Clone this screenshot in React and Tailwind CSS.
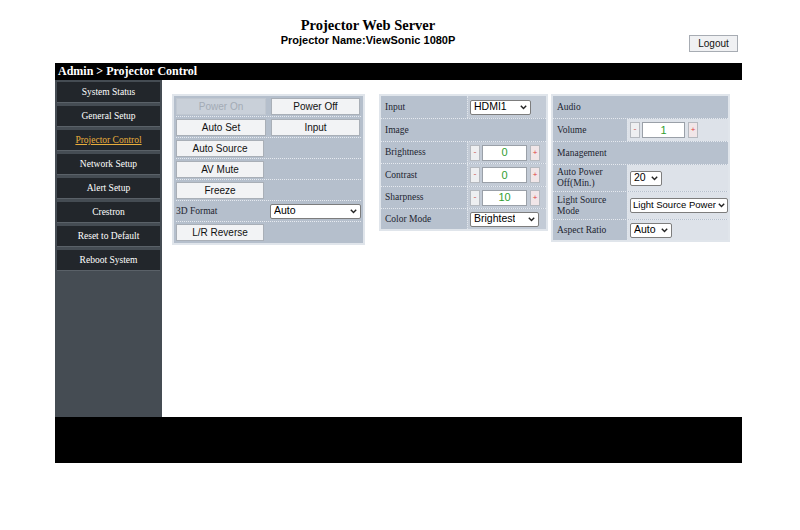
import React from 'react';

const MENU = [
  'System Status',
  'General Setup',
  'Projector Control',
  'Network Setup',
  'Alert Setup',
  'Crestron',
  'Reset to Default',
  'Reboot System',
];

const serif = "font-['Liberation_Serif',serif]";
const sans = "font-['Liberation_Sans',Arial,sans-serif]";

const Btn = ({ children, disabled, className = '' }) => (
  <div
    className={`h-[17px] flex items-center justify-center border ${sans} text-[10px] ${
      disabled
        ? 'bg-[#c9d0d9] border-[#c0c7d0] text-[#a3abb5]'
        : 'bg-[#f2f3f5] border-[#a9afb7] text-[#111]'
    } ${className}`}
  >
    {children}
  </div>
);

const Select = ({ value, small, className = '' }) => (
  <div
    className={`h-[15px] flex items-center justify-between bg-white border border-[#7d7d7d] rounded-[2px] ${
      small ? 'text-[9.5px] px-[2px]' : 'text-[10.5px] px-[3px]'
    } ${sans} text-black ${className}`}
  >
    <span className="whitespace-nowrap overflow-hidden min-w-0">{value}</span>
    <svg width="7" height="5" viewBox="0 0 7 5" className="shrink-0 ml-[2px]">
      <path d="M0.8 0.8 L3.5 3.6 L6.2 0.8" fill="none" stroke="#222" strokeWidth="1.4" />
    </svg>
  </div>
);

const Spinner = ({ value, inputW = 'w-[45px]' }) => (
  <div className="flex items-center gap-[2px]">
    <div className={`w-[10px] h-[16px] bg-[#eeeff1] border border-[#b5b9bf] flex items-center justify-center text-[9px] text-[#d06a6a] ${sans}`}>
      -
    </div>
    <div className={`${inputW} h-[16px] bg-white border border-[#9aa0a8] flex items-center justify-center text-[11px] text-[#2f9e2f] ${sans}`}>
      {value}
    </div>
    <div className={`w-[10px] h-[16px] ml-[1px] bg-[#f1e6e8] border border-[#b5b9bf] flex items-center justify-center text-[8px] text-[#e03c3c] ${sans}`}>
      +
    </div>
  </div>
);

const Row = ({ children, last, h = 'h-[21px]', className = '' }) => (
  <div
    className={`flex ${h} ${last ? '' : 'border-b border-dotted border-[#e6eaf0]'} ${className}`}
  >
    {children}
  </div>
);

const Label = ({ children, w, full }) => (
  <div
    className={`${full ? 'flex-1' : w} flex items-center px-[4px] bg-[#b7c1ce] text-[9.5px] leading-[11px] text-[#1d2530] ${serif}`}
  >
    {children}
  </div>
);

const Value = ({ children, bg = 'bg-[#c3cbd6]' }) => (
  <div className={`flex-1 flex items-center pl-[2px] border-l border-dotted border-[#e1e6ec] ${bg}`}>
    {children}
  </div>
);

function ButtonsPanel() {
  return (
    <div className="w-[193px] bg-[#b5bfcc] border-2 border-[#e0e5eb] px-[2px]">
      <Row className="items-center gap-[5px]">
        <Btn disabled className="w-[90px]">Power On</Btn>
        <Btn className="w-[89px]">Power Off</Btn>
      </Row>
      <Row className="items-center gap-[5px]">
        <Btn className="w-[90px]">Auto Set</Btn>
        <Btn className="w-[89px]">Input</Btn>
      </Row>
      <Row className="items-center">
        <Btn className="w-[88px]">Auto Source</Btn>
      </Row>
      <Row className="items-center">
        <Btn className="w-[88px]">AV Mute</Btn>
      </Row>
      <Row className="items-center">
        <Btn className="w-[88px]">Freeze</Btn>
      </Row>
      <Row className="items-center">
        <div className={`w-[94px] text-[9.5px] text-[#1d2530] ${serif}`}>3D Format</div>
        <Select value="Auto" className="w-[91px]" />
      </Row>
      <Row last className="items-center">
        <Btn className="w-[88px]">L/R Reverse</Btn>
      </Row>
    </div>
  );
}

function ImagePanel() {
  const lw = 'w-[86px]';
  return (
    <div className="w-[169px] bg-[#b5bfcc] border-2 border-[#e0e5eb]">
      <Row h="h-[23px]">
        <Label w={lw}>Input</Label>
        <Value>
          <Select value="HDMI1" className="w-[61px]" />
        </Value>
      </Row>
      <Row h="h-[23px]">
        <Label full>Image</Label>
      </Row>
      <Row h="h-[22px]">
        <Label w={lw}>Brightness</Label>
        <Value>
          <Spinner value="0" />
        </Value>
      </Row>
      <Row h="h-[23px]">
        <Label w={lw}>Contrast</Label>
        <Value>
          <Spinner value="0" />
        </Value>
      </Row>
      <Row h="h-[22px]">
        <Label w={lw}>Sharpness</Label>
        <Value>
          <Spinner value="10" />
        </Value>
      </Row>
      <Row last h="h-[20px]">
        <Label w={lw}>Color Mode</Label>
        <Value>
          <Select value="Brightest" className="w-[69px]" />
        </Value>
      </Row>
    </div>
  );
}

function AudioPanel() {
  const lw = 'w-[74px]';
  const bg = 'bg-[#dde2e9]';
  return (
    <div className="w-[179px] bg-[#b5bfcc] border-2 border-[#e0e5eb]">
      <Row h="h-[23px]">
        <Label full>Audio</Label>
      </Row>
      <Row h="h-[23px]">
        <Label w={lw}>Volume</Label>
        <Value bg={bg}>
          <Spinner value="1" inputW="w-[43px]" />
        </Value>
      </Row>
      <Row h="h-[23px]">
        <Label full>Management</Label>
      </Row>
      <Row h="h-[27px]">
        <Label w={lw}>Auto Power Off(Min.)</Label>
        <Value bg={bg}>
          <Select value="20" className="w-[32px]" />
        </Value>
      </Row>
      <Row h="h-[28px]">
        <Label w={lw}>Light Source Mode</Label>
        <Value bg={bg}>
          <Select small value="Light Source Power" className="w-[98px]" />
        </Value>
      </Row>
      <Row last h="h-[20px]">
        <Label w={lw}>Aspect Ratio</Label>
        <Value bg={bg}>
          <Select value="Auto" className="w-[42px]" />
        </Value>
      </Row>
    </div>
  );
}

export default function App() {
  return (
    <div className="w-[800px] h-[530px] bg-white">
      <div className="w-[687px] ml-[55px]">
        {/* page header */}
        <div className="flex h-[63px]">
          <div className="flex-1 flex flex-col items-center pt-[17px] pr-[8px]">
            <div className={`text-[14.5px] leading-[17px] font-bold text-black ${serif}`}>
              Projector Web Server
            </div>
            <div className={`text-[11px] leading-[13px] font-bold text-black ${sans}`}>
              Projector Name:ViewSonic 1080P
            </div>
          </div>
          <div className="pt-[35px] pr-[4px]">
            <div className={`w-[49px] h-[17px] flex items-center justify-center bg-[#f0f1f3] border border-[#a7acb3] text-[10px] text-[#111] ${sans}`}>
              Logout
            </div>
          </div>
        </div>

        {/* breadcrumb bar */}
        <div className={`h-[17px] bg-black text-white text-[12px] leading-[17px] font-bold pl-[3px] ${serif}`}>
          Admin &gt; Projector Control
        </div>

        <div className="flex h-[337px]">
          {/* side menu */}
          <div className="w-[107px] bg-[#454c53] pt-[2px] pl-[2px] flex flex-col gap-[3px]">
            {MENU.map((m) => (
              <div
                key={m}
                className={`w-[103px] h-[21px] bg-[#22262b] border-b border-[#5a6168] flex items-center justify-center text-[9.5px] ${serif} ${
                  m === 'Projector Control' ? 'text-[#e8ad3c] underline' : 'text-white'
                }`}
              >
                {m}
              </div>
            ))}
          </div>

          {/* control panels */}
          <div className="flex-1 flex items-start pt-[14px] pl-[10px]">
            <ButtonsPanel />
            <div className="ml-[14px]">
              <ImagePanel />
            </div>
            <div className="ml-[3px]">
              <AudioPanel />
            </div>
          </div>
        </div>

        <div className="h-[46px] bg-black" />
      </div>
    </div>
  );
}
